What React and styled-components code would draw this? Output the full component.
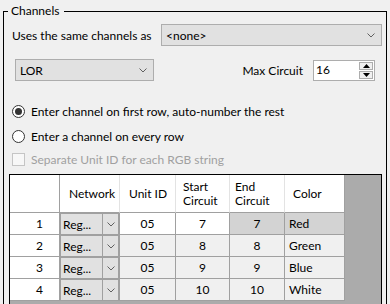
import React from 'react';
import styled, { createGlobalStyle } from 'styled-components';

const GlobalStyle = createGlobalStyle`
  html, body {
    margin: 0;
    padding: 0;
    background: #f0f0f0;
    overflow: hidden;
  }
  body {
    font-family: Lato, "Liberation Sans", sans-serif;
    font-size: 12px;
    color: #000;
  }
`;

// --- group box ---

const Group = styled.fieldset`
  box-sizing: border-box;
  width: 384px;
  min-width: 0;
  min-height: 330px;
  margin: 3px 0 0 3px;
  padding: 0 4px 0 5px;
  border: 1px solid #000;
  border-bottom: none;
`;

const Legend = styled.legend`
  margin-left: -1px;
  padding: 0 5px 0 3px;
  line-height: 16px;
`;

const Row = styled.div`
  display: flex;
  align-items: center;
  height: ${({ $h }) => $h}px;
  margin-top: ${({ $mt }) => $mt}px;
`;

const Label = styled.span`
  margin-left: ${({ $ml }) => $ml || 0}px;
  white-space: nowrap;
  color: ${({ $disabled }) => ($disabled ? '#a0a0a0' : '#000')};
`;

// --- combo box ---

const Combo = styled.div`
  box-sizing: border-box;
  display: flex;
  align-items: center;
  width: ${({ $w }) => $w}px;
  height: 22px;
  margin-left: ${({ $ml }) => $ml || 0}px;
  padding: 0 6px 0 4px;
  background: #e1e1e1;
  border: 1px solid #adadad;
`;

const ComboText = styled.span`
  flex: 1;
`;

const Chevron = () => (
  <svg width="8" height="5" viewBox="0 0 8 5">
    <polyline points="0.5,0.5 4,4 7.5,0.5" fill="none" stroke="#606060" strokeWidth="1" />
  </svg>
);

// --- spinner ---

const Spinner = styled.div`
  box-sizing: border-box;
  display: flex;
  width: 62px;
  height: 21px;
  margin: 0 7px 0 10px;
  background: #fff;
  border: 1px solid #adadad;
`;

const SpinText = styled.span`
  flex: 1;
  padding-left: 2px;
  line-height: 17px;
`;

const SpinButtons = styled.div`
  display: flex;
  flex-direction: column;
  gap: 1px;
  width: 14px;
  padding: 1px 1px 1px 0;
`;

const SpinButton = styled.div`
  box-sizing: border-box;
  flex: 1;
  display: flex;
  align-items: center;
  justify-content: center;
  background: #f0f0f0;
  border: 1px solid #adadad;
`;

const Arrow = ({ up }) => (
  <svg width="7" height="4" viewBox="0 0 7 4">
    <polygon points={up ? '0,4 3.5,0 7,4' : '0,0 3.5,4 7,0'} fill="#000" />
  </svg>
);

// --- radio / checkbox ---

const Radio = styled.span`
  box-sizing: border-box;
  display: flex;
  align-items: center;
  justify-content: center;
  width: 13px;
  height: 13px;
  margin-left: 3px;
  border: 1px solid #333;
  border-radius: 50%;
  background: #fff;

  &::after {
    content: '';
    display: ${({ $checked }) => ($checked ? 'block' : 'none')};
    width: 7px;
    height: 7px;
    border-radius: 50%;
    background: #333;
  }
`;

const CheckBox = styled.span`
  box-sizing: border-box;
  width: 13px;
  height: 13px;
  margin-left: 3px;
  border: 1px solid #c5c5c5;
  background: #f7f7f7;
`;

// --- data grid ---

const GridFrame = styled.div`
  margin-top: 4px;
  height: 140px;
  border: 1px solid #000;
  background: #ababab;
`;

const Grid = styled.div`
  display: grid;
  grid-template-columns: 50px 60px 56px 54px 55px 60px;
  grid-template-rows: 38px repeat(4, 22px);
  width: fit-content;
`;

const HeadCell = styled.div`
  box-sizing: border-box;
  display: flex;
  align-items: center;
  padding-left: ${({ $pl }) => $pl || 0}px;
  line-height: 14px;
  background: #fff;
  border-right: 1px solid ${({ $edge }) => ($edge ? '#a0a0a0' : '#e3e3e3')};
  border-bottom: 1px solid #a0a0a0;
`;

const RowHead = styled.div`
  box-sizing: border-box;
  display: flex;
  align-items: center;
  justify-content: flex-end;
  padding-right: 16px;
  background: #fff;
  border-right: 1px solid #a0a0a0;
  border-bottom: 1px solid #a0a0a0;
`;

const Cell = styled.div`
  box-sizing: border-box;
  display: flex;
  align-items: center;
  justify-content: ${({ $left }) => ($left ? 'flex-start' : 'center')};
  padding-left: ${({ $left }) => ($left ? 4 : 0)}px;
  background: ${({ $bg }) => $bg};
  border-right: 1px solid #a0a0a0;
  border-bottom: 1px solid #a0a0a0;
`;

const NetCell = styled.div`
  box-sizing: border-box;
  display: flex;
  border-right: 1px solid #a0a0a0;
  border-bottom: 1px solid #a0a0a0;
`;

const NetCombo = styled.div`
  box-sizing: border-box;
  flex: 1;
  display: flex;
  background: #e1e1e1;
  border: 1px solid #a0a0a0;
  border-bottom: none;
`;

const NetText = styled.span`
  flex: 1;
  display: flex;
  align-items: center;
  padding-left: 2px;
  border-right: 1px solid #a0a0a0;
`;

const NetButton = styled.span`
  display: flex;
  align-items: center;
  justify-content: center;
  width: 15px;
`;

const rows = [
  { n: 1, start: 7, end: 7, color: 'Red' },
  { n: 2, start: 8, end: 8, color: 'Green' },
  { n: 3, start: 9, end: 9, color: 'Blue' },
  { n: 4, start: 10, end: 10, color: 'White' },
];

export default function App() {
  return (
    <>
      <GlobalStyle />
      <Group>
        <Legend>Channels</Legend>

        <Row $h={22} $mt={5}>
          <Label $ml={3}>Uses the same channels as</Label>
          <Combo $w={221} style={{ marginLeft: 'auto' }}>
            <ComboText>&lt;none&gt;</ComboText>
            <Chevron />
          </Combo>
        </Row>

        <Row $h={22} $mt={13}>
          <Combo $w={139} $ml={6}>
            <ComboText>LOR</ComboText>
            <Chevron />
          </Combo>
          <Label style={{ marginLeft: 'auto' }}>Max Circuit</Label>
          <Spinner>
            <SpinText>16</SpinText>
            <SpinButtons>
              <SpinButton><Arrow up /></SpinButton>
              <SpinButton><Arrow /></SpinButton>
            </SpinButtons>
          </Spinner>
        </Row>

        <Row $h={25} $mt={18}>
          <Radio $checked />
          <Label $ml={6}>Enter channel on first row, auto-number the rest</Label>
        </Row>
        <Row $h={25}>
          <Radio />
          <Label $ml={6}>Enter a channel on every row</Label>
        </Row>
        <Row $h={21}>
          <CheckBox />
          <Label $ml={6} $disabled>Separate Unit ID for each RGB string</Label>
        </Row>

        <GridFrame>
          <Grid>
            <HeadCell $edge />
            <HeadCell $pl={9}>Network</HeadCell>
            <HeadCell $pl={9}>Unit ID</HeadCell>
            <HeadCell $pl={7}>Start<br />Circuit</HeadCell>
            <HeadCell $pl={5}>End<br />Circuit</HeadCell>
            <HeadCell $pl={8} $edge>Color</HeadCell>

            {rows.map((r) => {
              const first = r.n === 1;
              return (
                <React.Fragment key={r.n}>
                  <RowHead>{r.n}</RowHead>
                  <NetCell>
                    <NetCombo>
                      <NetText>Reg...</NetText>
                      <NetButton><Chevron /></NetButton>
                    </NetCombo>
                  </NetCell>
                  <Cell $bg={first ? '#fff' : '#f0f0f0'}>05</Cell>
                  <Cell $bg={first ? '#fff' : '#f0f0f0'}>{r.start}</Cell>
                  <Cell $bg={first ? '#d3d3d3' : '#f0f0f0'}>{r.end}</Cell>
                  <Cell $bg={first ? '#d3d3d3' : '#f0f0f0'} $left>{r.color}</Cell>
                </React.Fragment>
              );
            })}
          </Grid>
        </GridFrame>
      </Group>
    </>
  );
}
